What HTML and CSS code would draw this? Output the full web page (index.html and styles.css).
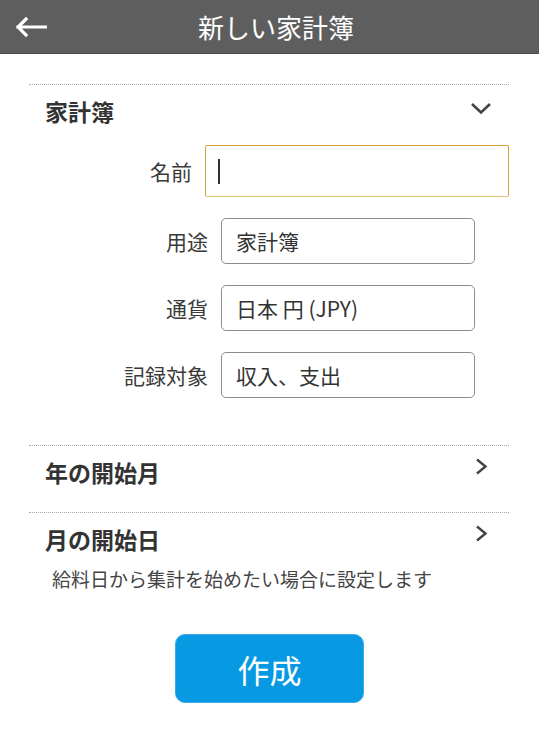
FILE: index.html
```html
<!DOCTYPE html>
<html lang="ja">
<head>
<meta charset="utf-8">
<title>新しい家計簿</title>
<link rel="stylesheet" href="styles.css">
</head>
<body>
<header class="appbar">
  <svg class="back" width="33" height="20" viewBox="0 0 33 20" aria-hidden="true">
    <path d="M4 10 H32 M12 2 L4 10 L12 18" fill="none" stroke="#fff" stroke-width="3.2" stroke-linecap="square" stroke-linejoin="miter"/>
  </svg>
  <h1 class="title">新しい家計簿</h1>
</header>
<main class="content">
  <section class="section section--book">
    <div class="section-head">
      <h2 class="section-title">家計簿</h2>
      <svg class="chev-down" width="22" height="13" viewBox="0 0 22 13" aria-hidden="true">
        <path d="M2 2 L11 10.5 L20 2" fill="none" stroke="#444" stroke-width="2.6"/>
      </svg>
    </div>
    <div class="form">
      <div class="row row--focused">
        <span class="label">名前</span>
        <div class="field field--focused"><span class="caret"></span></div>
      </div>
      <div class="row">
        <span class="label">用途</span>
        <div class="field">家計簿</div>
      </div>
      <div class="row">
        <span class="label">通貨</span>
        <div class="field">日本 円 (JPY)</div>
      </div>
      <div class="row">
        <span class="label">記録対象</span>
        <div class="field">収入、支出</div>
      </div>
    </div>
  </section>
  <section class="section">
    <div class="section-head">
      <h2 class="section-title">年の開始月</h2>
      <svg class="chev-right" width="13" height="17" viewBox="0 0 13 17" aria-hidden="true">
        <path d="M2 1.5 L10.5 8.5 L2 15.5" fill="none" stroke="#444" stroke-width="2.4"/>
      </svg>
    </div>
  </section>
  <section class="section section--last">
    <div class="section-head">
      <h2 class="section-title">月の開始日</h2>
      <svg class="chev-right" width="13" height="17" viewBox="0 0 13 17" aria-hidden="true">
        <path d="M2 1.5 L10.5 8.5 L2 15.5" fill="none" stroke="#444" stroke-width="2.4"/>
      </svg>
    </div>
    <p class="note">給料日から集計を始めたい場合に設定します</p>
  </section>
  <div class="actions">
    <button class="create" type="button">作成</button>
  </div>
</main>
</body>
</html>
```
FILE: styles.css
```css
* { box-sizing: border-box; }
html, body { margin: 0; padding: 0; background: #fff; }
body {
  font-family: "Noto Sans CJK JP", "Noto Sans", "Liberation Sans", sans-serif;
  color: #333;
  width: 539px;
}
.appbar {
  height: 54px;
  background: #5e5e5e;
  border-bottom: 1px solid #4b4b4b;
  display: flex;
  align-items: center;
  padding-left: 14px;
}
.back { display: block; flex: none; margin-top: 1px; }
.title {
  flex: 1;
  margin: 0;
  padding-right: 34px;
  text-align: center;
  font-size: 26px;
  font-weight: 400;
  line-height: 34px;
  color: #fff;
}
.content {
  padding: 30px 30px 0 29px;
}
.section {
  border-top: 1px dotted #a8a8a8;
  padding-bottom: 24px;
}
.section--book { padding-bottom: 47px; }
.section--last { padding-bottom: 0; }
.section-head {
  display: flex;
  justify-content: space-between;
  align-items: flex-start;
  padding: 10px 0 0 16px;
}
.section-title {
  margin: 0;
  font-size: 23px;
  font-weight: 700;
  line-height: 32px;
  color: #333;
}
.chev-down { margin: 7px 17px 0 0; display: block; }
.chev-right { margin: 2px 21px 0 0; display: block; }
.form {
  margin-top: 18px;
  display: flex;
  flex-direction: column;
  gap: 21px;
}
.row {
  display: flex;
  align-items: center;
  gap: 13px;
}
.label {
  width: 179px;
  text-align: right;
  font-size: 21px;
  line-height: 30px;
  color: #3a3a3a;
}
.field {
  width: 254px;
  height: 46px;
  border: 1px solid #8c8c8c;
  border-radius: 5px;
  padding-left: 14px;
  display: flex;
  align-items: center;
  font-size: 21px;
  color: #333;
}
.row--focused .label { width: 163px; }
.field--focused {
  width: 304px;
  height: 52px;
  border: 1px solid #d3a137;
  border-bottom-color: #e0c27a;
  border-radius: 2px;
  padding-left: 12px;
}
.caret {
  display: block;
  width: 2px;
  height: 25px;
  background: #333;
}
.note {
  margin: 11px 0 0 23px;
  font-size: 19px;
  line-height: 26px;
  color: #444;
}
.actions {
  display: flex;
  justify-content: center;
  margin-top: 42px;
  margin-left: -29px;
  margin-right: -30px;
}
.create {
  width: 189px;
  height: 69px;
  border: 1px solid #3aa9e6;
  border-radius: 10px;
  background: #079ae2;
  color: #fff;
  font-family: inherit;
  font-size: 32px;
  line-height: 1;
  padding: 0;
}
```
